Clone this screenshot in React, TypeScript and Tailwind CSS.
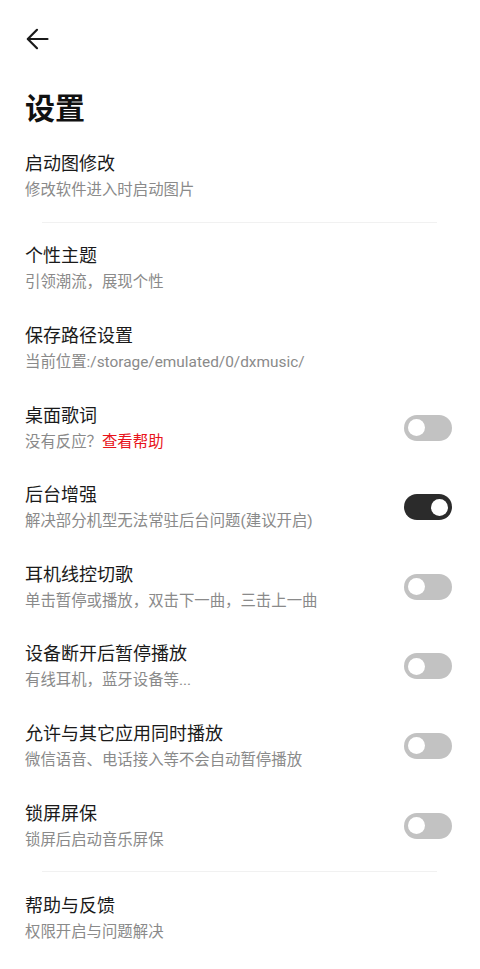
import React, { useState } from "react";

interface SettingItem {
  title: string;
  desc: React.ReactNode;
  toggle?: boolean;
}

function Toggle({ on, onChange }: { on: boolean; onChange: () => void }) {
  return (
    <button
      type="button"
      onClick={onChange}
      className={`relative flex h-[26px] w-[48px] shrink-0 items-center rounded-full px-[4px] ${
        on ? "justify-end bg-[#2b2b2b]" : "justify-start bg-[#c2c2c2]"
      }`}
    >
      <span className="block h-[17px] w-[17px] rounded-full bg-white" />
    </button>
  );
}

function Row({
  item,
  on,
  onToggle,
}: {
  item: SettingItem;
  on?: boolean;
  onToggle?: () => void;
}) {
  return (
    <div className="flex items-center justify-between pl-[25px] pr-[28px] py-[13.8px]">
      <div className="flex min-w-0 flex-col">
        <span className="text-[18px] leading-[28px] text-[#1a1a1a]">
          {item.title}
        </span>
        <span className="text-[15.4px] leading-[24px] text-[#8a8a8a]">
          {item.desc}
        </span>
      </div>
      {item.toggle && onToggle && <Toggle on={!!on} onChange={onToggle} />}
    </div>
  );
}

const Divider = () => (
  <div className="my-[6px] ml-[42px] mr-[43px] h-px bg-[#f1f1f1]" />
);

export default function App() {
  const [toggles, setToggles] = useState<Record<string, boolean>>({
    lyric: false,
    background: true,
    wire: false,
    disconnect: false,
    mix: false,
    lock: false,
  });

  const flip = (k: string) => setToggles((t) => ({ ...t, [k]: !t[k] }));

  const switches: (SettingItem & { key: string })[] = [
    {
      key: "lyric",
      title: "桌面歌词",
      desc: (
        <>
          没有反应？<span className="text-[#e8141b]">查看帮助</span>
        </>
      ),
      toggle: true,
    },
    {
      key: "background",
      title: "后台增强",
      desc: "解决部分机型无法常驻后台问题(建议开启)",
      toggle: true,
    },
    {
      key: "wire",
      title: "耳机线控切歌",
      desc: "单击暂停或播放，双击下一曲，三击上一曲",
      toggle: true,
    },
    {
      key: "disconnect",
      title: "设备断开后暂停播放",
      desc: "有线耳机，蓝牙设备等...",
      toggle: true,
    },
    {
      key: "mix",
      title: "允许与其它应用同时播放",
      desc: "微信语音、电话接入等不会自动暂停播放",
      toggle: true,
    },
    {
      key: "lock",
      title: "锁屏屏保",
      desc: "锁屏后启动音乐屏保",
      toggle: true,
    },
  ];

  return (
    <div
      className="min-h-[969px] w-full bg-white"
      style={{ fontFamily: 'Roboto, "Noto Sans CJK SC", sans-serif' }}
    >
      {/* Top bar */}
      <div className="flex h-[78px] items-center pl-[26px]">
        <svg
          width="23"
          height="22"
          viewBox="0 0 23 22"
          fill="none"
          stroke="#1a1a1a"
          strokeWidth="2.2"
          strokeLinecap="round"
          strokeLinejoin="round"
        >
          <path d="M21.5 11H2" />
          <path d="M11 1.8L1.8 11L11 20.2" />
        </svg>
      </div>

      <h1 className="mt-[11px] mb-[7px] pl-[25px] text-[30px] font-bold leading-[40px] text-[#111]">
        设置
      </h1>

      <Row item={{ title: "启动图修改", desc: "修改软件进入时启动图片" }} />
      <Divider />
      <Row item={{ title: "个性主题", desc: "引领潮流，展现个性" }} />
      <Row
        item={{
          title: "保存路径设置",
          desc: "当前位置:/storage/emulated/0/dxmusic/",
        }}
      />
      {switches.map((s) => (
        <Row
          key={s.key}
          item={s}
          on={toggles[s.key]}
          onToggle={() => flip(s.key)}
        />
      ))}
      <Divider />
      <Row item={{ title: "帮助与反馈", desc: "权限开启与问题解决" }} />
    </div>
  );
}
